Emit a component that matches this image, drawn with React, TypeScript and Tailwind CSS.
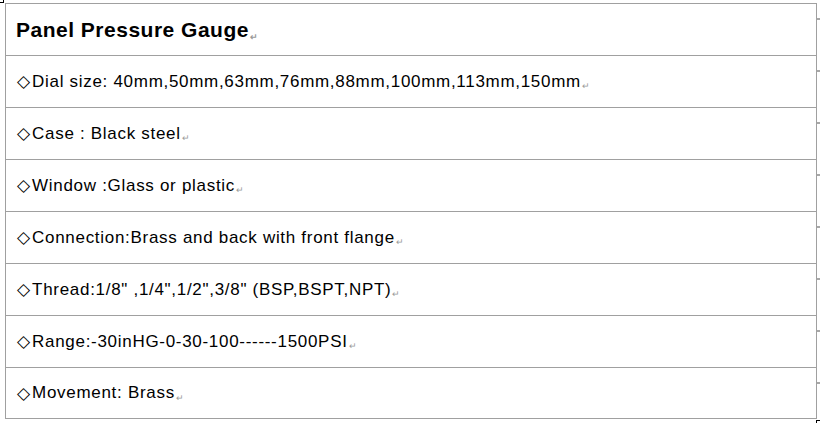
import React from "react";

const rows = [
  "Dial size: 40mm,50mm,63mm,76mm,88mm,100mm,113mm,150mm",
  "Case : Black steel",
  "Window :Glass or plastic",
  "Connection:Brass and back with front flange",
  'Thread:1/8" ,1/4",1/2",3/8" (BSP,BSPT,NPT)',
  "Range:-30inHG-0-30-100------1500PSI",
  "Movement: Brass",
];

// Word's paragraph mark
const Mark = () => (
  <span className="ml-[1px] self-end mb-[3px] text-[9px] leading-none tracking-normal text-[#9a9a9a]">↵</span>
);

// end-of-row marker just outside the right border
const RowTick = () => (
  <span className="absolute -right-[4px] top-[14px] h-[2px] w-[3px] bg-[#a8a8a8]" />
);

export default function App() {
  return (
    <div className="relative h-[423px] w-[820px] overflow-hidden bg-white pl-[5px] pt-[3px] font-['Liberation_Sans',Arial,sans-serif] text-black">
      <span className="absolute left-0 top-0 h-[3px] w-[4px] border-b border-r border-black" />
      <span className="absolute left-[816px] top-[420px] h-[3px] w-[4px] border-l border-t border-black" />

      <div className="w-[812px] border border-b-0 border-[#a0a0a0]">
        <div className="relative flex h-[52px] items-center border-b border-[#a0a0a0] pl-[10px]">
          <span className="flex text-[21px] font-bold tracking-[0.5px]">
            Panel Pressure Gauge
            <Mark />
          </span>
          <RowTick />
        </div>
        {rows.map((r, i) => (
          <div
            key={i}
            className={`relative flex items-center border-b border-[#a0a0a0] pl-[11px] ${
              i === rows.length - 1 ? "h-[51px]" : "h-[52px]"
            }`}
          >
            <span className="flex items-center text-[17px] tracking-[0.7px]">
              <span className="mr-[2px] font-['DejaVu_Sans'] text-[17px] leading-none tracking-normal">◇</span>
              {r}
              <Mark />
            </span>
            <RowTick />
          </div>
        ))}
      </div>
    </div>
  );
}
